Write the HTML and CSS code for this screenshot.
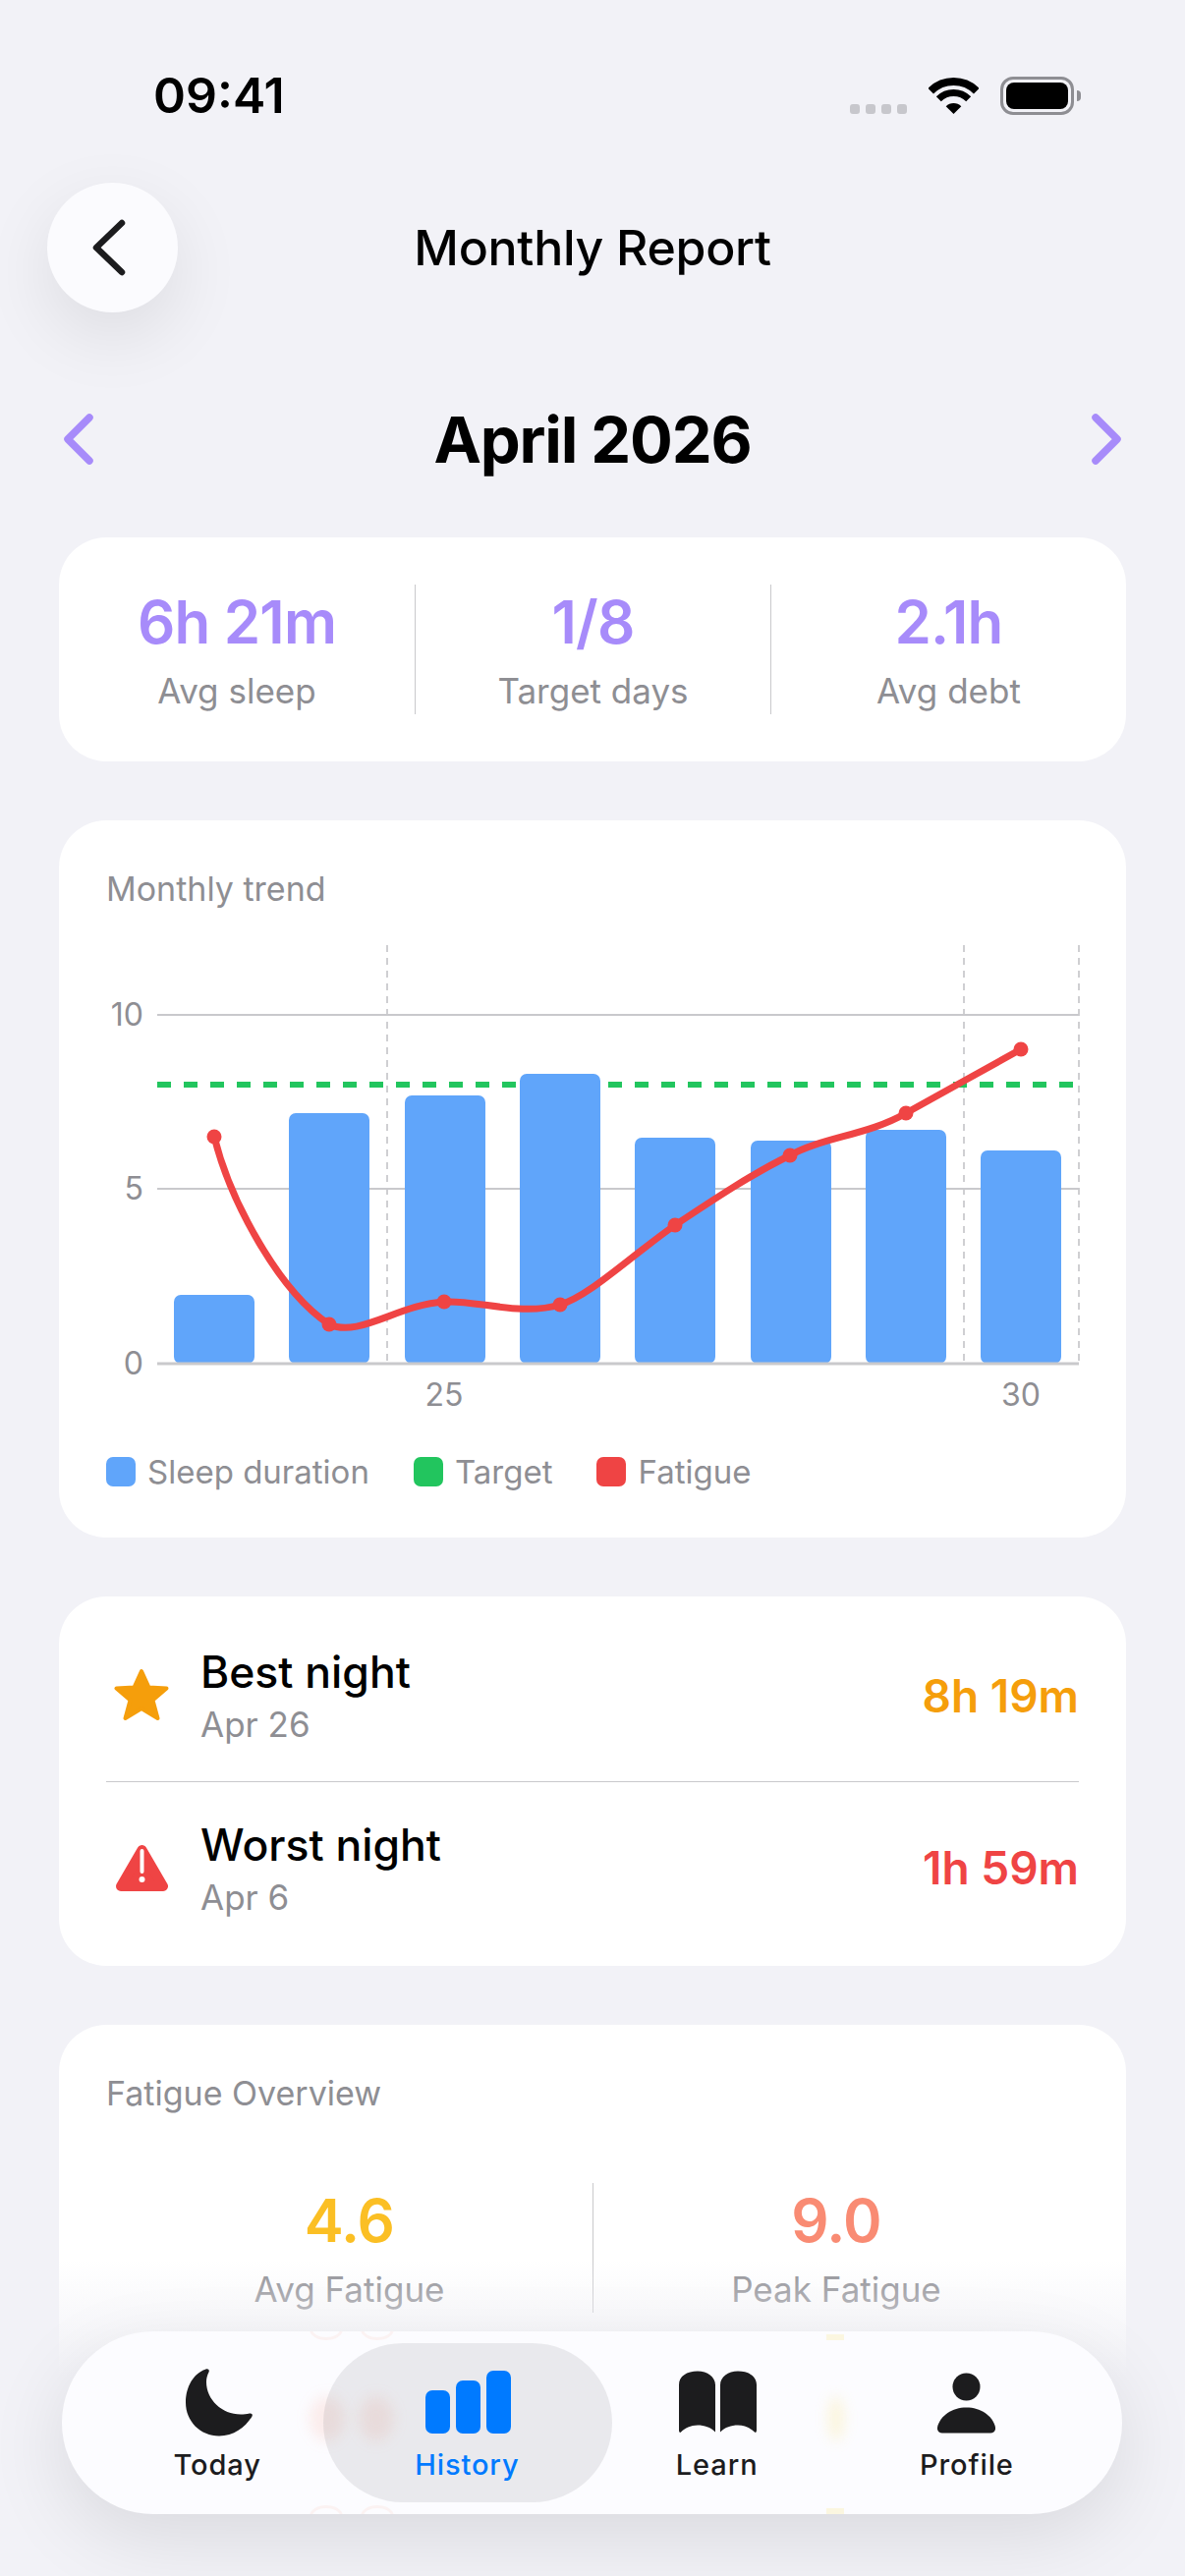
FILE: index.html
```html
<!DOCTYPE html>
<html lang="en">
<head>
  <meta charset="UTF-8">
  <meta name="viewport" content="width=device-width, initial-scale=1.0">
  <title>Monthly Report</title>
  <link rel="stylesheet" href="styles.css">
</head>
<body>
  <!-- Status bar -->
  <div class="status-bar">
    <span class="status-time">09:41</span>
    <div class="status-icons">
      <div class="signal-dots"><i></i><i></i><i></i><i></i></div>
      <svg class="wifi-icon" viewBox="0 0 51 37">
        <path d="M2.2 13.7A33 33 0 0 1 48.8 13.7" fill="none" stroke="#000" stroke-width="8"/>
        <path d="M10.3 21.8A21.5 21.5 0 0 1 40.7 21.8" fill="none" stroke="#000" stroke-width="7"/>
        <path d="M25.5 37L17.7 29.2A11 11 0 0 1 33.3 29.2Z" fill="#000"/>
      </svg>
      <div class="battery"><div class="battery-fill"></div></div>
    </div>
  </div>

  <header class="top-header">
    <button class="back-btn">
      <svg viewBox="0 0 40 62" class="back-icon"><path d="M32 6L6 31L32 56" /></svg>
    </button>
    <h1>Monthly Report</h1>
    <div class="header-spacer"></div>
  </header>

  <div class="month-row">
    <svg viewBox="0 0 32 52" class="month-arrow"><path d="M27 4L5 26L27 48" /></svg>
    <h2>April 2026</h2>
    <svg viewBox="0 0 32 52" class="month-arrow"><path d="M5 4L27 26L5 48" /></svg>
  </div>

  <main class="content">
    <!-- Resumen -->
    <section class="card stats-card">
      <div class="stat">
        <div class="stat-value purple">6h 21m</div>
        <div class="stat-label">Avg sleep</div>
      </div>
      <div class="stat">
        <div class="stat-value purple">1/8</div>
        <div class="stat-label">Target days</div>
      </div>
      <div class="stat">
        <div class="stat-value purple">2.1h</div>
        <div class="stat-label">Avg debt</div>
      </div>
    </section>

    <!-- Grafico -->
    <section class="card chart-card">
      <div class="card-title">Monthly trend</div>
      <svg class="chart" viewBox="108 950 990 500">
        <g class="grid-v">
          <line x1="394" y1="962" x2="394" y2="1388"/>
          <line x1="981" y1="962" x2="981" y2="1388"/>
          <line x1="1098" y1="962" x2="1098" y2="1388"/>
        </g>
        <g class="grid-h">
          <line x1="160" y1="1033" x2="1098" y2="1033"/>
          <line x1="160" y1="1210" x2="1098" y2="1210"/>
        </g>
        <line class="target-line" x1="160" y1="1104" x2="1096" y2="1104"/>
        <g class="bars">
          <rect x="177" y="1318" width="82" height="70" rx="7"/>
          <rect x="294" y="1133" width="82" height="255" rx="7"/>
          <rect x="412" y="1115" width="82" height="273" rx="7"/>
          <rect x="529" y="1093" width="82" height="295" rx="7"/>
          <rect x="646" y="1158" width="82" height="230" rx="7"/>
          <rect x="764" y="1161" width="82" height="227" rx="7"/>
          <rect x="881" y="1150" width="82" height="238" rx="7"/>
          <rect x="998" y="1171" width="82" height="217" rx="7"/>
        </g>
        <line class="axis" x1="160" y1="1388" x2="1098" y2="1388"/>
        <path class="fatigue-line" d="M218 1157C235 1225 285 1315 335 1348C365 1362 405 1328 452 1325C485 1323 530 1340 570 1328C600 1319 640 1280 687 1247C726 1221 765 1195 804 1176C835 1158 885 1155 922 1133C961 1111 1000 1090 1039 1068"/>
        <g class="fatigue-dots">
          <circle cx="218" cy="1157" r="7.5"/>
          <circle cx="335" cy="1348" r="7.5"/>
          <circle cx="452" cy="1325" r="7.5"/>
          <circle cx="570" cy="1328" r="7.5"/>
          <circle cx="687" cy="1247" r="7.5"/>
          <circle cx="804" cy="1176" r="7.5"/>
          <circle cx="922" cy="1133" r="7.5"/>
          <circle cx="1039" cy="1068" r="7.5"/>
        </g>
        <g class="axis-text">
          <text x="146" y="1044" text-anchor="end">10</text>
          <text x="146" y="1221" text-anchor="end">5</text>
          <text x="146" y="1399" text-anchor="end">0</text>
          <text x="452" y="1431" text-anchor="middle">25</text>
          <text x="1039" y="1431" text-anchor="middle">30</text>
        </g>
      </svg>
      <div class="legend">
        <div class="legend-item"><span class="swatch blue"></span>Sleep duration</div>
        <div class="legend-item"><span class="swatch green"></span>Target</div>
        <div class="legend-item"><span class="swatch red"></span>Fatigue</div>
      </div>
    </section>

    <!-- Mejor y peor noche -->
    <section class="card nights-card">
      <div class="night-row">
        <div class="night-icon">
          <svg viewBox="0 0 56 55" width="56" height="55"><polygon points="28,3 35.5,19.5 53.5,20.5 39.5,32.5 44.5,51 28,41 11.5,51 16.5,32.5 2.5,20.5 20.5,19.5" fill="#f59e0b" stroke="#f59e0b" stroke-width="4" stroke-linejoin="round"/></svg>
        </div>
        <div class="night-text">
          <div class="night-name">Best night</div>
          <div class="night-date">Apr 26</div>
        </div>
        <div class="night-value orange">8h 19m</div>
      </div>
      <div class="night-row">
        <div class="night-icon">
          <svg viewBox="0 0 53 48" width="53" height="48">
            <polygon points="26.5,6 48,43 5,43" fill="#ef4444" stroke="#ef4444" stroke-width="10" stroke-linejoin="round"/>
            <rect x="24.5" y="5" width="4" height="25" rx="2" fill="#fff"/>
            <circle cx="26.5" cy="36" r="3" fill="#fff"/>
          </svg>
        </div>
        <div class="night-text">
          <div class="night-name">Worst night</div>
          <div class="night-date">Apr 6</div>
        </div>
        <div class="night-value red-text">1h 59m</div>
      </div>
    </section>

    <section class="card fatigue-card">
      <div class="card-title">Fatigue Overview</div>
      <div class="fatigue-stats">
        <div class="stat">
          <div class="stat-value yellow">4.6</div>
          <div class="stat-label">Avg Fatigue</div>
        </div>
        <div class="stat">
          <div class="stat-value salmon">9.0</div>
          <div class="stat-label">Peak Fatigue</div>
        </div>
      </div>
    </section>
  </main>

  <div class="bottom-fade"></div>

  <!-- Barra de navegacion -->
  <nav class="tab-bar">
    <div class="blur-spot spot-red spot-left-a"></div>
    <div class="blur-spot spot-red spot-left-b"></div>
    <div class="blur-spot spot-yellow spot-right"></div>
    <div class="edge-ring ring-top ring-a"></div>
    <div class="edge-ring ring-top ring-b"></div>
    <div class="edge-ring ring-bottom ring-a"></div>
    <div class="edge-ring ring-bottom ring-b"></div>
    <div class="edge-tick tick-top"></div>
    <div class="edge-tick tick-bottom"></div>
    <div class="active-pill"></div>
    <a class="tab-item">
      <svg class="tab-icon icon-moon" viewBox="0 0 68 69" width="68" height="69"><path d="M20 1.2C8 5 0 19 0 35C0 54 15 69 34 69C49 69 61 60 67.5 49C68.5 47 67 45.5 65 46C62 46.8 59 47 56 47C37 47 21 32 21 14C21 10 22 7 23.5 4C24.5 2 23 0 20 1.2Z"/></svg>
      <span>Today</span>
    </a>
    <a class="tab-item active">
      <svg class="tab-icon icon-bars" viewBox="0 0 87 64" width="87" height="64">
        <rect x="0" y="20" width="25" height="44" rx="7"/>
        <rect x="31" y="10" width="25" height="54" rx="7"/>
        <rect x="62" y="0" width="25" height="64" rx="7"/>
      </svg>
      <span>History</span>
    </a>
    <a class="tab-item">
      <svg class="tab-icon icon-book" viewBox="0 0 79 63" width="79" height="63">
        <path d="M0 14C0 5 8 0 19 0C29 0 37 6 37 14V62C32 57 26 55 19 55C12 55 6 58 2 62C1 63 0 62 0 60Z"/>
        <path d="M42 14C42 6 50 0 60 0C71 0 79 5 79 14V60C79 62 78 63 77 62C73 58 67 55 60 55C53 55 47 57 42 62Z"/>
      </svg>
      <span>Learn</span>
    </a>
    <a class="tab-item">
      <svg class="tab-icon" viewBox="0 0 59 63" width="59" height="63">
        <circle cx="29.5" cy="16" r="14"/>
        <path d="M0 57C3 45 15 37 29.5 37C44 37 56 45 59 57C59.5 61 57 63 54 63H5C2 63 -0.5 61 0 57Z"/>
      </svg>
      <span>Profile</span>
    </a>
  </nav>
</body>
</html>
```

FILE: styles.css
```css
:root {
  --background-color: #f2f2f7;
  --text-color: #000;
  --gray-text: #8e8e93;
  --purple: #a78bfa;
  --blue: #60a5fa;
  --green: #22c55e;
  --red: #ef4444;
  --orange: #f59e0b;
  --line-color: #c9c9cc;
}

html, body {
  height: 2622px;
  overflow: hidden;
}

body {
  font-family: 'Inter', 'Liberation Sans', sans-serif;
  margin: 0;
  background-color: var(--background-color);
  color: var(--text-color);
  position: relative;
}

/* Status bar */
.status-bar {
  display: flex;
  justify-content: space-between;
  align-items: center;
  height: 78px;
  padding: 58px 106px 50px 156px;
}

.status-time {
  font-size: 50px;
  font-weight: 600;
}

.status-icons {
  display: flex;
  align-items: flex-end;
  gap: 22px;
}

.signal-dots {
  display: flex;
  gap: 6px;
  margin-bottom: 1px;
}

.signal-dots i {
  width: 10px;
  height: 10px;
  border-radius: 3px;
  background-color: #c7c7cc;
}

.wifi-icon {
  width: 51px;
  height: 37px;
  margin-bottom: 1px;
}

.battery {
  box-sizing: border-box;
  width: 75px;
  height: 39px;
  padding: 3px;
  border: 3px solid #8e8e93;
  border-radius: 13px;
  margin-right: 7px;
  position: relative;
}

.battery::after {
  content: "";
  position: absolute;
  left: 75px;
  top: 11px;
  width: 4px;
  height: 11px;
  border-radius: 0 4px 4px 0;
  background-color: #8e8e93;
}

.battery-fill {
  height: 100%;
  border-radius: 8px;
  background-color: #000;
}

/* Header */
.top-header {
  display: flex;
  align-items: center;
  height: 132px;
  padding: 0 48px;
}

.top-header h1 {
  flex: 1;
  margin: 0;
  text-align: center;
  font-size: 50px;
  font-weight: 550;
  letter-spacing: -0.3px;
}

.header-spacer {
  width: 133px;
}

.back-btn {
  width: 133px;
  height: 132px;
  padding: 0;
  border: none;
  border-radius: 50%;
  background-color: #fbfbfe;
  box-shadow: 0 24px 72px rgba(0, 0, 0, 0.09);
  display: flex;
  align-items: center;
  justify-content: center;
}

.back-icon {
  width: 40px;
  height: 62px;
  margin-left: -6px;
}

.back-icon path {
  fill: none;
  stroke: #1c1c1e;
  stroke-width: 6.5;
  stroke-linecap: round;
  stroke-linejoin: round;
}

.month-row {
  display: flex;
  align-items: center;
  justify-content: space-between;
  height: 80px;
  margin-top: 89px;
  margin-bottom: 60px;
  padding: 0 64px;
}

.month-row h2 {
  margin: 0;
  font-size: 65px;
  font-weight: 700;
  letter-spacing: -1.2px;
}

.month-arrow {
  width: 32px;
  height: 52px;
}

.month-arrow path {
  fill: none;
  stroke: var(--purple);
  stroke-width: 7.5;
  stroke-linecap: round;
  stroke-linejoin: round;
}

/* Cards */
.content {
  display: flex;
  flex-direction: column;
  gap: 60px;
  padding: 0 60px;
}

.card {
  background-color: #fff;
  border-radius: 48px;
}

.card-title {
  font-size: 34px;
  line-height: 44px;
  color: var(--gray-text);
}

.stats-card {
  display: grid;
  grid-template-columns: repeat(3, 1fr);
  padding: 48px 0;
}

.stat {
  height: 132px;
  text-align: center;
  display: flex;
  flex-direction: column;
  align-items: center;
  padding-top: 2px;
  box-sizing: border-box;
}

.stat + .stat {
  border-left: 1px solid #c9c9cc;
}

.stat-value {
  font-size: 60px;
  line-height: 72px;
  font-weight: 600;
  letter-spacing: -0.8px;
}

.stat-label {
  margin-top: 12px;
  font-size: 35px;
  line-height: 44px;
  color: var(--gray-text);
}

.purple { color: var(--purple); }
.yellow { color: #fbbf24; }
.salmon { color: #f98b73; }

/* Grafico */
.chart-card {
  padding: 48px 48px 47px;
}

.chart {
  display: block;
  width: 990px;
  height: 500px;
  margin-top: 23px;
  overflow: visible;
}

.grid-v line {
  stroke: #cfcfd2;
  stroke-width: 2;
  stroke-dasharray: 7 6;
}

.grid-h line {
  stroke: #c9c9cc;
  stroke-width: 2;
}

.target-line {
  stroke: var(--green);
  stroke-width: 6;
  stroke-dasharray: 14 13;
}

.bars rect {
  fill: var(--blue);
}

.axis {
  stroke: #c9c9cc;
  stroke-width: 3;
}

.fatigue-line {
  fill: none;
  stroke: var(--red);
  stroke-width: 7;
}

.fatigue-dots circle {
  fill: var(--red);
}

.axis-text text {
  font-size: 32px;
  fill: var(--gray-text);
}

.legend {
  display: flex;
  gap: 45px;
  margin-top: 28px;
}

.legend-item {
  display: flex;
  align-items: center;
  gap: 12px;
  font-size: 33px;
  line-height: 40px;
  color: var(--gray-text);
}

.swatch {
  width: 30px;
  height: 30px;
  border-radius: 7px;
}

.swatch.blue { background-color: var(--blue); }
.swatch.green { background-color: var(--green); }
.swatch.red { background-color: var(--red); }

/* Noches */
.nights-card {
  padding: 13px 48px 13px;
}

.night-row {
  display: flex;
  align-items: center;
  height: 174px;
}

.night-row:first-child {
  height: 175px;
  border-bottom: 1px solid #c9c9cc;
}

.night-icon {
  width: 72px;
  display: flex;
  justify-content: center;
  margin-right: 24px;
}

.night-text {
  flex: 1;
}

.night-name {
  font-size: 44.5px;
  line-height: 54px;
  font-weight: 500;
}

.night-date {
  margin-top: 5px;
  font-size: 35px;
  line-height: 42px;
  color: var(--gray-text);
}

.night-value {
  font-size: 46px;
  font-weight: 600;
}

.orange { color: var(--orange); }
.red-text { color: var(--red); }

.fatigue-card {
  padding: 48px 48px 260px;
}

.fatigue-stats {
  display: grid;
  grid-template-columns: 1fr 1fr;
  margin-top: 69px;
}

/* Degradado inferior */
.bottom-fade {
  position: absolute;
  left: 0;
  right: 0;
  top: 2300px;
  bottom: 0;
  background: linear-gradient(to bottom, rgba(242, 242, 247, 0) 0, #f2f2f7 120px);
}

/* Barra de navegacion */
.tab-bar {
  position: absolute;
  left: 63px;
  right: 64px;
  bottom: 63px;
  height: 186px;
  box-sizing: border-box;
  padding: 37px 31px 0;
  display: grid;
  grid-template-columns: repeat(4, 1fr);
  border-radius: 93px;
  background-color: #fcfcff;
  box-shadow: 0 24px 80px rgba(0, 0, 0, 0.1);
  overflow: hidden;
}

.active-pill {
  position: absolute;
  left: 266px;
  top: 12px;
  width: 294px;
  height: 162px;
  border-radius: 81px;
  background-color: rgba(120, 120, 128, 0.14);
}

.tab-item {
  position: relative;
  display: flex;
  flex-direction: column;
  align-items: center;
  color: #1c1c1e;
}

.tab-icon {
  height: 70px;
  fill: #1c1c1e;
}

.icon-moon { margin-left: 3px; }
.icon-bars { margin-left: 3px; }
.icon-book { margin-left: 2px; }

.tab-item span {
  margin-top: 11px;
  font-size: 29px;
  letter-spacing: 0.9px;
  line-height: 36px;
  font-weight: 500;
}

.tab-item.active {
  color: #007aff;
}

.tab-item.active .tab-icon {
  fill: #007aff;
}

/* Reflejos del contenido detras de la barra */
.blur-spot {
  position: absolute;
  top: 66px;
  width: 36px;
  height: 46px;
  border-radius: 50%;
  filter: blur(7px);
}

.spot-red { background-color: rgba(249, 139, 115, 0.14); }
.spot-yellow { background-color: rgba(251, 213, 36, 0.16); }
.spot-left-a { left: 252px; }
.spot-left-b { left: 302px; }
.spot-right { left: 780px; width: 16px; }

.edge-ring {
  position: absolute;
  width: 28px;
  height: 16px;
  border: 3px solid rgba(249, 139, 115, 0.09);
  border-radius: 50%;
}

.ring-top { top: -13px; }
.ring-bottom { bottom: -13px; }
.ring-a { left: 252px; }
.ring-b { left: 304px; }

.edge-tick {
  position: absolute;
  left: 778px;
  width: 18px;
  height: 6px;
  background-color: rgba(251, 213, 36, 0.14);
}

.tick-top { top: 3px; }
.tick-bottom { bottom: 0; }
```
